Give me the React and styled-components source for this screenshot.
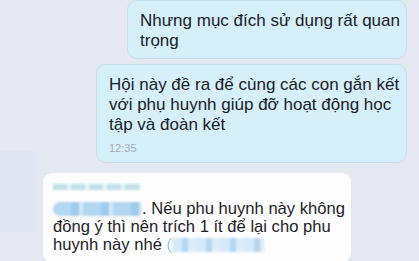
import React from "react";
import styled, { createGlobalStyle } from "styled-components";

const GlobalStyle = createGlobalStyle`
  html, body {
    margin: 0;
    padding: 0;
    background: #e5e8f0;
  }
  body {
    font-family: "Liberation Sans", Arial, sans-serif;
    overflow: hidden;
  }
`;

const messages = [
  {
    id: 1,
    width: 280,
    lines: ["Nhưng mục đích sử dụng rất quan", "trọng"],
  },
  {
    id: 2,
    width: 311,
    lines: [
      "Hội này đề ra để cùng các con gắn kết",
      "với phụ huynh giúp đỡ hoạt động học",
      "tập và đoàn kết",
    ],
    time: "12:35",
  },
];

export default function App() {
  return (
    <>
      <GlobalStyle />
      <Screen>
        <Avatar />
        <Thread>
          {messages.map((m) => (
            <Row key={m.id} $mine>
              <Bubble $mine $width={m.width}>
                {m.lines.map((l) => (
                  <Line key={l}>{l}</Line>
                ))}
                {m.time && <Time>{m.time}</Time>}
              </Bubble>
            </Row>
          ))}
          <Row $gap={9}>
            <Bubble $width={310}>
              <Sender>
                <Blur $w={88} $color="#bfe1e6" />
              </Sender>
              <Line $size={16.6} $lh={18}>
                <Mention $w={89} />. Nếu phu huynh này không
              </Line>
              <Line $size={16.6} $lh={18}>
                đồng ý thì nên trích 1 ít để lại cho phu
              </Line>
              <Line $size={16.6} $lh={18}>
                huynh này nhé <Paren>(</Paren>
                <Mention $w={92} $paren />
              </Line>
            </Bubble>
          </Row>
        </Thread>
      </Screen>
    </>
  );
}

const Screen = styled.div`
  position: relative;
  width: 419px;
  height: 261px;
  overflow: hidden;
  background: #e5e8f0;
`;

const Avatar = styled.div`
  position: absolute;
  left: 0;
  top: 151px;
  width: 36px;
  height: 81px;
  background: #dde6f1;
`;

const Thread = styled.div`
  display: flex;
  flex-direction: column;
  padding: 0 12px 0 42px;
`;

const Row = styled.div`
  display: flex;
  justify-content: ${(p) => (p.$mine ? "flex-end" : "flex-start")};
  margin-top: ${(p) => (p.$gap ? p.$gap : 5)}px;
  &:first-child {
    margin-top: 0;
  }
`;

const Bubble = styled.div`
  box-sizing: border-box;
  width: ${(p) => p.$width}px;
  padding: ${(p) => (p.$mine ? "10px 12px 7px 12px" : "7px 10px 8px 10px")};
  border-radius: 10px;
  background: ${(p) => (p.$mine ? "#d5effb" : "#fdfdfe")};
  border: 1px solid ${(p) => (p.$mine ? "#c6dfec" : "#e4e7ec")};
`;

const Line = styled.div`
  font-size: ${(p) => (p.$size ? p.$size : 17)}px;
  line-height: ${(p) => (p.$lh ? p.$lh : 20)}px;
  color: #1d2126;
  white-space: nowrap;
`;

const Paren = styled.span`
  color: #9fc9ea;
  filter: blur(0.4px);
`;

const Time = styled.div`
  margin-top: 6px;
  font-size: 11px;
  line-height: 14px;
  color: #a3abb4;
`;

const Sender = styled.div`
  height: 14px;
  display: flex;
  align-items: center;
  margin-bottom: 6px;
`;

const Blur = styled.span`
  display: inline-block;
  width: ${(p) => p.$w}px;
  height: 6px;
  background: repeating-linear-gradient(
    90deg,
    ${(p) => p.$color} 0 14px,
    #e4f1f3 14px 18px
  );
  filter: blur(0.8px);
`;

const Mention = styled.span`
  display: inline-block;
  vertical-align: -2px;
  width: ${(p) => p.$w}px;
  height: 14px;
  border-radius: ${(p) => (p.$paren ? "0" : "7px 2px 2px 7px")};
  background: ${(p) =>
    p.$paren
      ? "repeating-linear-gradient(90deg, #d6e9f7 0 10px, #b5d6f0 10px 16px, #dcecf8 16px 24px)"
      : "repeating-linear-gradient(90deg, #b3d7f1 0 18px, #9fcbec 18px 26px, #d2e7f6 26px 30px)"};
  filter: blur(0.8px);
`;
